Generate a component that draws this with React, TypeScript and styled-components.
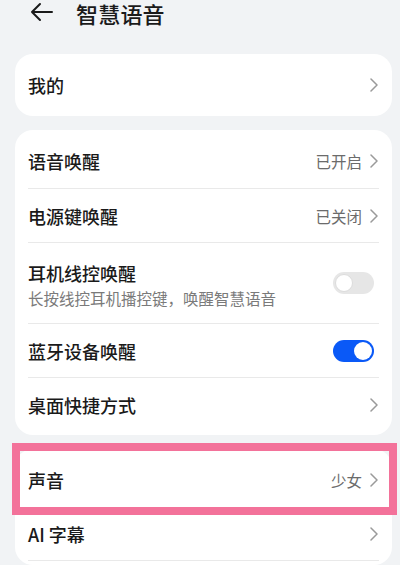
import React from "react";
import styled, { createGlobalStyle } from "styled-components";

const GlobalStyle = createGlobalStyle`
  html, body {
    margin: 0;
    padding: 0;
    background: #f1f3f5;
  }
  body {
    font-family: "Noto Sans CJK SC", "Noto Sans", "Liberation Sans", sans-serif;
    color: #191919;
  }
`;

const Page = styled.div`
  width: 400px;
  height: 565px;
  overflow: hidden;
  box-sizing: border-box;
  padding: 0 8px 0 15px;
  display: flex;
  flex-direction: column;
  gap: 14px;
`;

const Header = styled.div`
  height: 26px;
  margin-bottom: 15px;
  display: flex;
  align-items: center;
  gap: 21px;
  padding-left: 14px;
`;

const BackButton = styled.div`
  width: 26px;
  height: 26px;
  display: flex;
  align-items: center;
  justify-content: center;
  margin-top: -2px;
`;

const Title = styled.h1`
  margin: 0;
  font-size: 22px;
  line-height: 24px;
  font-weight: 500;
  color: #1a1a1a;
  letter-spacing: 0.2px;
`;

const Card = styled.div`
  background: #ffffff;
  border-radius: 18px;
  padding: 4px 0;
  display: flex;
  flex-direction: column;
`;

const Row = styled.div<{ $tall?: boolean; $last?: boolean }>`
  position: relative;
  box-sizing: border-box;
  min-height: ${(p) => (p.$tall ? 81 : 54)}px;
  margin: 0 13px;
  display: flex;
  align-items: center;
  justify-content: space-between;
  border-bottom: ${(p) => (p.$last ? "1px solid #e9e9e9" : "none")};
  & + & {
    border-top: 1px solid #e9e9e9;
  }
`;

const TextBlock = styled.div`
  display: flex;
  flex-direction: column;
  gap: 3px;
  padding-top: 2px;
`;

const Label = styled.div`
  font-size: 18px;
  font-weight: 500;
  line-height: 24px;
  color: #1a1a1a;
`;

const Sub = styled.div`
  font-size: 15.5px;
  line-height: 20px;
  color: #7a7a7a;
`;

const Right = styled.div`
  display: flex;
  align-items: center;
  gap: 8px;
  margin-right: 1px;
`;

const Value = styled.span`
  font-size: 15.5px;
  color: #6b6b6b;
`;

const Track = styled.div<{ $on: boolean }>`
  width: 41px;
  height: 22px;
  border-radius: 11px;
  box-sizing: border-box;
  background: ${(p) => (p.$on ? "#0a59f7" : "#e6e6e6")};
  margin-right: 5px;
  display: flex;
  align-items: center;
  justify-content: ${(p) => (p.$on ? "flex-end" : "flex-start")};
  padding: 0 2px;
`;

const Knob = styled.div<{ $on: boolean }>`
  width: 18px;
  height: 18px;
  border-radius: 50%;
  background: #ffffff;
  box-sizing: border-box;
  border: ${(p) => (p.$on ? "none" : "1px solid #dcdcdc")};
`;

const Highlight = styled.div`
  position: absolute;
  z-index: 2;
  top: -10px;
  bottom: -8px;
  left: -16px;
  right: -18px;
  border: 8px solid #f3729a;
  pointer-events: none;
`;

const Chevron = () => (
  <svg width="8" height="14" viewBox="0 0 8 14" fill="none">
    <path d="M1 1l6 6-6 6" stroke="#9a9a9a" strokeWidth="1.5" strokeLinecap="round" strokeLinejoin="round" />
  </svg>
);

const BackArrow = () => (
  <svg width="24" height="20" viewBox="0 0 24 20" fill="none">
    <path d="M22 10H2M10 2L2 10l8 8" stroke="#1a1a1a" strokeWidth="2" strokeLinecap="round" strokeLinejoin="round" />
  </svg>
);

const Toggle = ({ on }: { on: boolean }) => (
  <Track $on={on}>
    <Knob $on={on} />
  </Track>
);

interface NavRowProps {
  label: string;
  value?: string;
  highlight?: boolean;
  last?: boolean;
}

const NavRow = ({ label, value, highlight, last }: NavRowProps) => (
  <Row $last={last}>
    <Label>{label}</Label>
    <Right>
      {value && <Value>{value}</Value>}
      <Chevron />
    </Right>
    {highlight && <Highlight />}
  </Row>
);

const App = () => {
  return (
    <>
      <GlobalStyle />
      <Page>
        <Header>
          <BackButton>
            <BackArrow />
          </BackButton>
          <Title>智慧语音</Title>
        </Header>
        <Card>
          <NavRow label="我的" />
        </Card>
        <Card>
          <NavRow label="语音唤醒" value="已开启" />
          <NavRow label="电源键唤醒" value="已关闭" />
          <Row $tall>
            <TextBlock>
              <Label>耳机线控唤醒</Label>
              <Sub>长按线控耳机播控键，唤醒智慧语音</Sub>
            </TextBlock>
            <Toggle on={false} />
          </Row>
          <Row>
            <Label>蓝牙设备唤醒</Label>
            <Toggle on={true} />
          </Row>
          <NavRow label="桌面快捷方式" />
        </Card>
        <Card>
          <NavRow label="声音" value="少女" highlight />
          <NavRow label="AI 字幕" last />
        </Card>
      </Page>
    </>
  );
};

export default App;
